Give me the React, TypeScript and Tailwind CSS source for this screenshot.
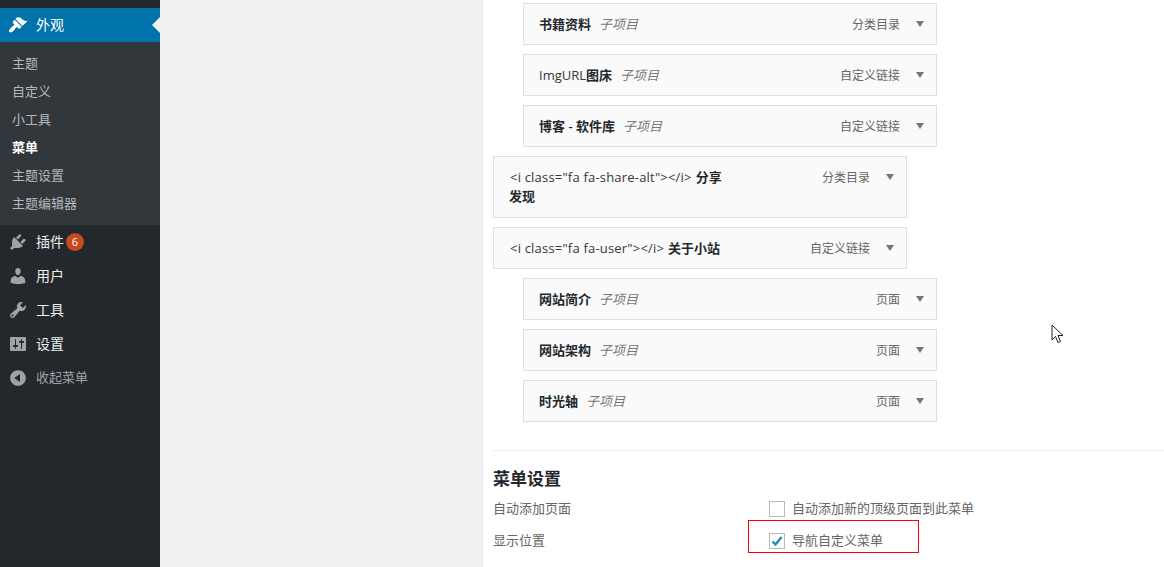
const FONT = "font-['Open_Sans','Noto_Sans_CJK_SC',sans-serif]";

function BrushIcon() {
  return (
    <svg width="20" height="20" viewBox="0 0 20 20" fill="currentColor">
      <path d="M14.48 11.06L7.41 3.99l1.5-1.5c.5-.56 2.3-.47 3.51.32 1.21.8 1.43 1.28 2.91 2.1 1.18.64 2.45 1.26 4.45.85zm-.71.71L6.7 4.7 4.93 6.47c-.39.39-.39 1.02 0 1.41l1.06 1.06c.39.39.39 1.03 0 1.42-.6.6-1.43 1.11-2.21 1.69-.35.26-.7.53-1.01.84C1.43 14.23.4 16.08 1.4 17.07c.99 1 2.84-.03 4.18-1.36.31-.31.58-.66.85-1.02.57-.78 1.08-1.61 1.69-2.21.39-.39 1.02-.39 1.41 0l1.06 1.06c.39.39 1.02.39 1.41 0z" />
    </svg>
  );
}

function PluginIcon() {
  return (
    <svg width="20" height="20" viewBox="0 0 20 20" fill="currentColor">
      <path d="M13.11 4.36L9.87 7.6 8 5.73l3.24-3.24c.35-.34 1.05-.2 1.56.32.52.51.66 1.21.31 1.55zm-8 1.77l.91-1.12 9.01 9.01-1.19.84c-.71.71-2.63 1.16-3.82 1.16H6.14L4.9 17.26c-.59.59-1.54.59-2.12 0-.59-.58-.59-1.53 0-2.12l1.24-1.24v-3.88c0-1.13.4-3.19 1.09-3.89zm7.26 3.97l3.24-3.24c.34-.35 1.04-.21 1.55.31.52.51.66 1.21.31 1.55l-3.24 3.25z" />
    </svg>
  );
}

function UserIcon() {
  return (
    <svg width="20" height="20" viewBox="0 0 20 20" fill="currentColor">
      <path d="M10 9.25c-2.27 0-2.73-3.44-2.73-3.44C7 4.02 7.82 2 9.97 2c2.16 0 2.98 2.02 2.71 3.81 0 0-.41 3.44-2.68 3.44zm0 2.57L12.72 10c2.39 0 4.52 2.33 4.52 4.53v2.49s-3.65 1.13-7.24 1.13c-3.65 0-7.24-1.13-7.24-1.13v-2.49c0-2.25 1.94-4.48 4.47-4.48z" />
    </svg>
  );
}

function WrenchIcon() {
  return (
    <svg width="20" height="20" viewBox="0 0 20 20" fill="currentColor">
      <path d="M16.68 9.77c-1.34 1.34-3.3 1.67-4.95.99l-5.41 6.52c-.99.99-2.59.99-3.58 0s-.99-2.59 0-3.57l6.52-5.42c-.68-1.65-.35-3.61.99-4.95 1.28-1.28 3.12-1.62 4.72-1.06l-2.89 2.89 2.82 2.82 2.86-2.87c.53 1.58.18 3.39-1.08 4.65zM3.81 16.21c.4.39 1.04.39 1.43 0 .4-.4.4-1.04 0-1.43-.39-.4-1.03-.4-1.43 0-.39.39-.39 1.03 0 1.43z" />
    </svg>
  );
}

function SettingsIcon() {
  return (
    <svg width="20" height="20" viewBox="0 0 20 20" fill="currentColor">
      <path d="M18 16V4c0-.55-.45-1-1-1H3c-.55 0-1 .45-1 1v12c0 .55.45 1 1 1h14c.55 0 1-.45 1-1zM8 11h1c.55 0 1 .45 1 1s-.45 1-1 1H8v1.500c0 .28-.22.5-.5.5s-.5-.22-.5-.5V13H6c-.55 0-1-.45-1-1s.45-1 1-1h1V5.500c0-.28.22-.5.5-.5s.5.22.5.5V11zm5-2h-1c-.55 0-1-.45-1-1s.45-1 1-1h1V5.500c0-.28.22-.5.5-.5s.5.22.5.5V7h1c.55 0 1 .45 1 1s-.45 1-1 1h-1v5.500c0 .28-.22.5-.5.5s-.5-.22-.5-.5V9z" />
    </svg>
  );
}

function CollapseIcon() {
  return (
    <svg width="20" height="20" viewBox="0 0 20 20" fill="currentColor">
      <path d="M10 2.160c4.330 0 7.840 3.510 7.840 7.840s-3.510 7.840-7.840 7.840S2.160 14.330 2.160 10 5.710 2.160 10 2.160zm2 11.720V6.120L6.180 9.880z" />
    </svg>
  );
}

function MainItem({
  icon,
  label,
  badge,
  dim,
}: {
  icon: React.ReactNode;
  label: string;
  badge?: string;
  dim?: boolean;
}) {
  return (
    <div className="flex h-[34px] items-center pl-[8px]">
      <span className="flex w-[28px] text-[#9ea3a8]">{icon}</span>
      <span className={dim ? "text-[13px] text-[#9ea3a8]" : "-mt-[2px] text-[14px] text-[#eeeeee]"}>{label}</span>
      {badge && (
        <span className="ml-[2px] flex h-[18px] w-[18px] items-center justify-center rounded-full bg-[#ca4a1f] text-[11px] text-white">
          {badge}
        </span>
      )}
    </div>
  );
}

function Sidebar() {
  const subItems = ["主题", "自定义", "小工具", "菜单", "主题设置", "主题编辑器"];
  return (
    <aside className="w-[160px] shrink-0 bg-[#23282d] pt-[8px]">
      <div className="relative flex h-[34px] items-center bg-[#0073aa] pl-[8px] text-white">
        <span className="flex w-[28px]">
          <BrushIcon />
        </span>
        <span className="-mt-[2px] text-[14px]">外观</span>
        <span className="absolute right-0 top-[9px] h-0 w-0 border-y-[8px] border-r-[8px] border-y-transparent border-r-[#f1f1f1]" />
      </div>
      <ul className="flex h-[183px] flex-col bg-[#32373c] pt-[8px]">
        {subItems.map((item) => (
          <li
            key={item}
            className={`flex h-[28px] items-center pl-[12px] text-[13px] ${
              item === "菜单" ? "font-semibold text-white" : "text-[#b4b9be]"
            }`}
          >
            {item}
          </li>
        ))}
      </ul>
      <MainItem icon={<PluginIcon />} label="插件" badge="6" />
      <MainItem icon={<UserIcon />} label="用户" />
      <MainItem icon={<WrenchIcon />} label="工具" />
      <MainItem icon={<SettingsIcon />} label="设置" />
      <MainItem icon={<CollapseIcon />} label="收起菜单" dim />
    </aside>
  );
}

function MenuRow({
  title,
  nextLine,
  prefix,
  sub,
  type,
  raw,
}: {
  title: string;
  nextLine?: string;
  prefix?: string;
  sub?: boolean;
  type: string;
  raw?: string;
}) {
  return (
    <div
      className={`flex w-[414px] justify-between border border-[#dfdfdf] bg-[#fafafa] text-[13px] ${
        sub ? "ml-[30px]" : ""
      } ${nextLine ? "h-[62px]" : "h-[42px]"}`}
    >
      <div className="pl-[15px] pt-[10px] leading-[20px]">
        <div>
          {raw && <span className="ml-[1px] mr-[4px] tracking-[0.2px] text-[#32373c]">{raw}</span>}
          {prefix && <span className="text-[#32373c]">{prefix}</span>}
          <span className="font-semibold text-[#23282d]">{title}</span>
          {sub && <em className="ml-[8px] text-[#777777]">子项目</em>}
        </div>
        {nextLine && <div className="-mt-[1px] font-semibold text-[#23282d]">{nextLine}</div>}
      </div>
      <div className="flex pt-[11px] text-[12px] leading-[20px] text-[#666666]">
        <span>{type}</span>
        <span className="ml-[16px] mr-[12px] mt-[6px] h-0 w-0 border-x-[4px] border-t-[6px] border-x-transparent border-t-[#72777c]" />
      </div>
    </div>
  );
}

function SettingRow({ label, text, checked }: { label: string; text: string; checked?: boolean }) {
  return (
    <div className="flex h-[32px] items-center text-[13px] text-[#666666]">
      <span className="w-[276px]">{label}</span>
      <span className="flex h-[16px] w-[16px] items-center justify-center border border-[#b4b9be] bg-white">
        {checked && (
          <svg width="14" height="14" viewBox="0 0 14 14" fill="none">
            <path d="M2.500 7.500l3 3 6-7.500" stroke="#1e8cbe" strokeWidth="2.400" />
          </svg>
        )}
      </span>
      <span className="ml-[7px]">{text}</span>
    </div>
  );
}

export default function App() {
  return (
    <div className={`relative flex h-[567px] w-[1164px] overflow-hidden bg-[#f1f1f1] ${FONT}`}>
      <Sidebar />
      <div className="w-[322px] shrink-0" />
      <main className="flex-1 border-l border-[#e5e5e5] bg-white pl-[10px] pt-[3px]">
        <div className="flex flex-col gap-[9px]">
          <MenuRow title="书籍资料" sub type="分类目录" />
          <MenuRow prefix="ImgURL" title="图床" sub type="自定义链接" />
          <MenuRow title="博客 - 软件库" sub type="自定义链接" />
          <MenuRow raw={'<i class="fa fa-share-alt"></i>'} title="分享" nextLine="发现" type="分类目录" />
          <MenuRow raw={'<i class="fa fa-user"></i>'} title="关于小站" type="自定义链接" />
          <MenuRow title="网站简介" sub type="页面" />
          <MenuRow title="网站架构" sub type="页面" />
          <MenuRow title="时光轴" sub type="页面" />
        </div>
        <div className="mt-[28px] border-t border-[#eeeeee] pt-[15px]">
          <h3 className="text-[17px] font-semibold leading-[26px] text-[#23282d]">菜单设置</h3>
          <div className="mt-[1px]">
            <SettingRow label="自动添加页面" text="自动添加新的顶级页面到此菜单" />
            <SettingRow label="显示位置" text="导航自定义菜单" checked />
          </div>
        </div>
      </main>

      {/* red annotation box drawn over the screenshot */}
      <div className="absolute left-[748px] top-[520px] h-[33px] w-[171px] border border-[#ff0000]" />

      {/* mouse pointer */}
      <svg className="absolute left-[1051px] top-[324px]" width="13" height="21" viewBox="0 0 13 21" fill="#ffffff" stroke="#222222">
        <path d="M1 1v15l3.500-3.500 2.500 6 2.500-1-2.500-6h5z" />
      </svg>
    </div>
  );
}
